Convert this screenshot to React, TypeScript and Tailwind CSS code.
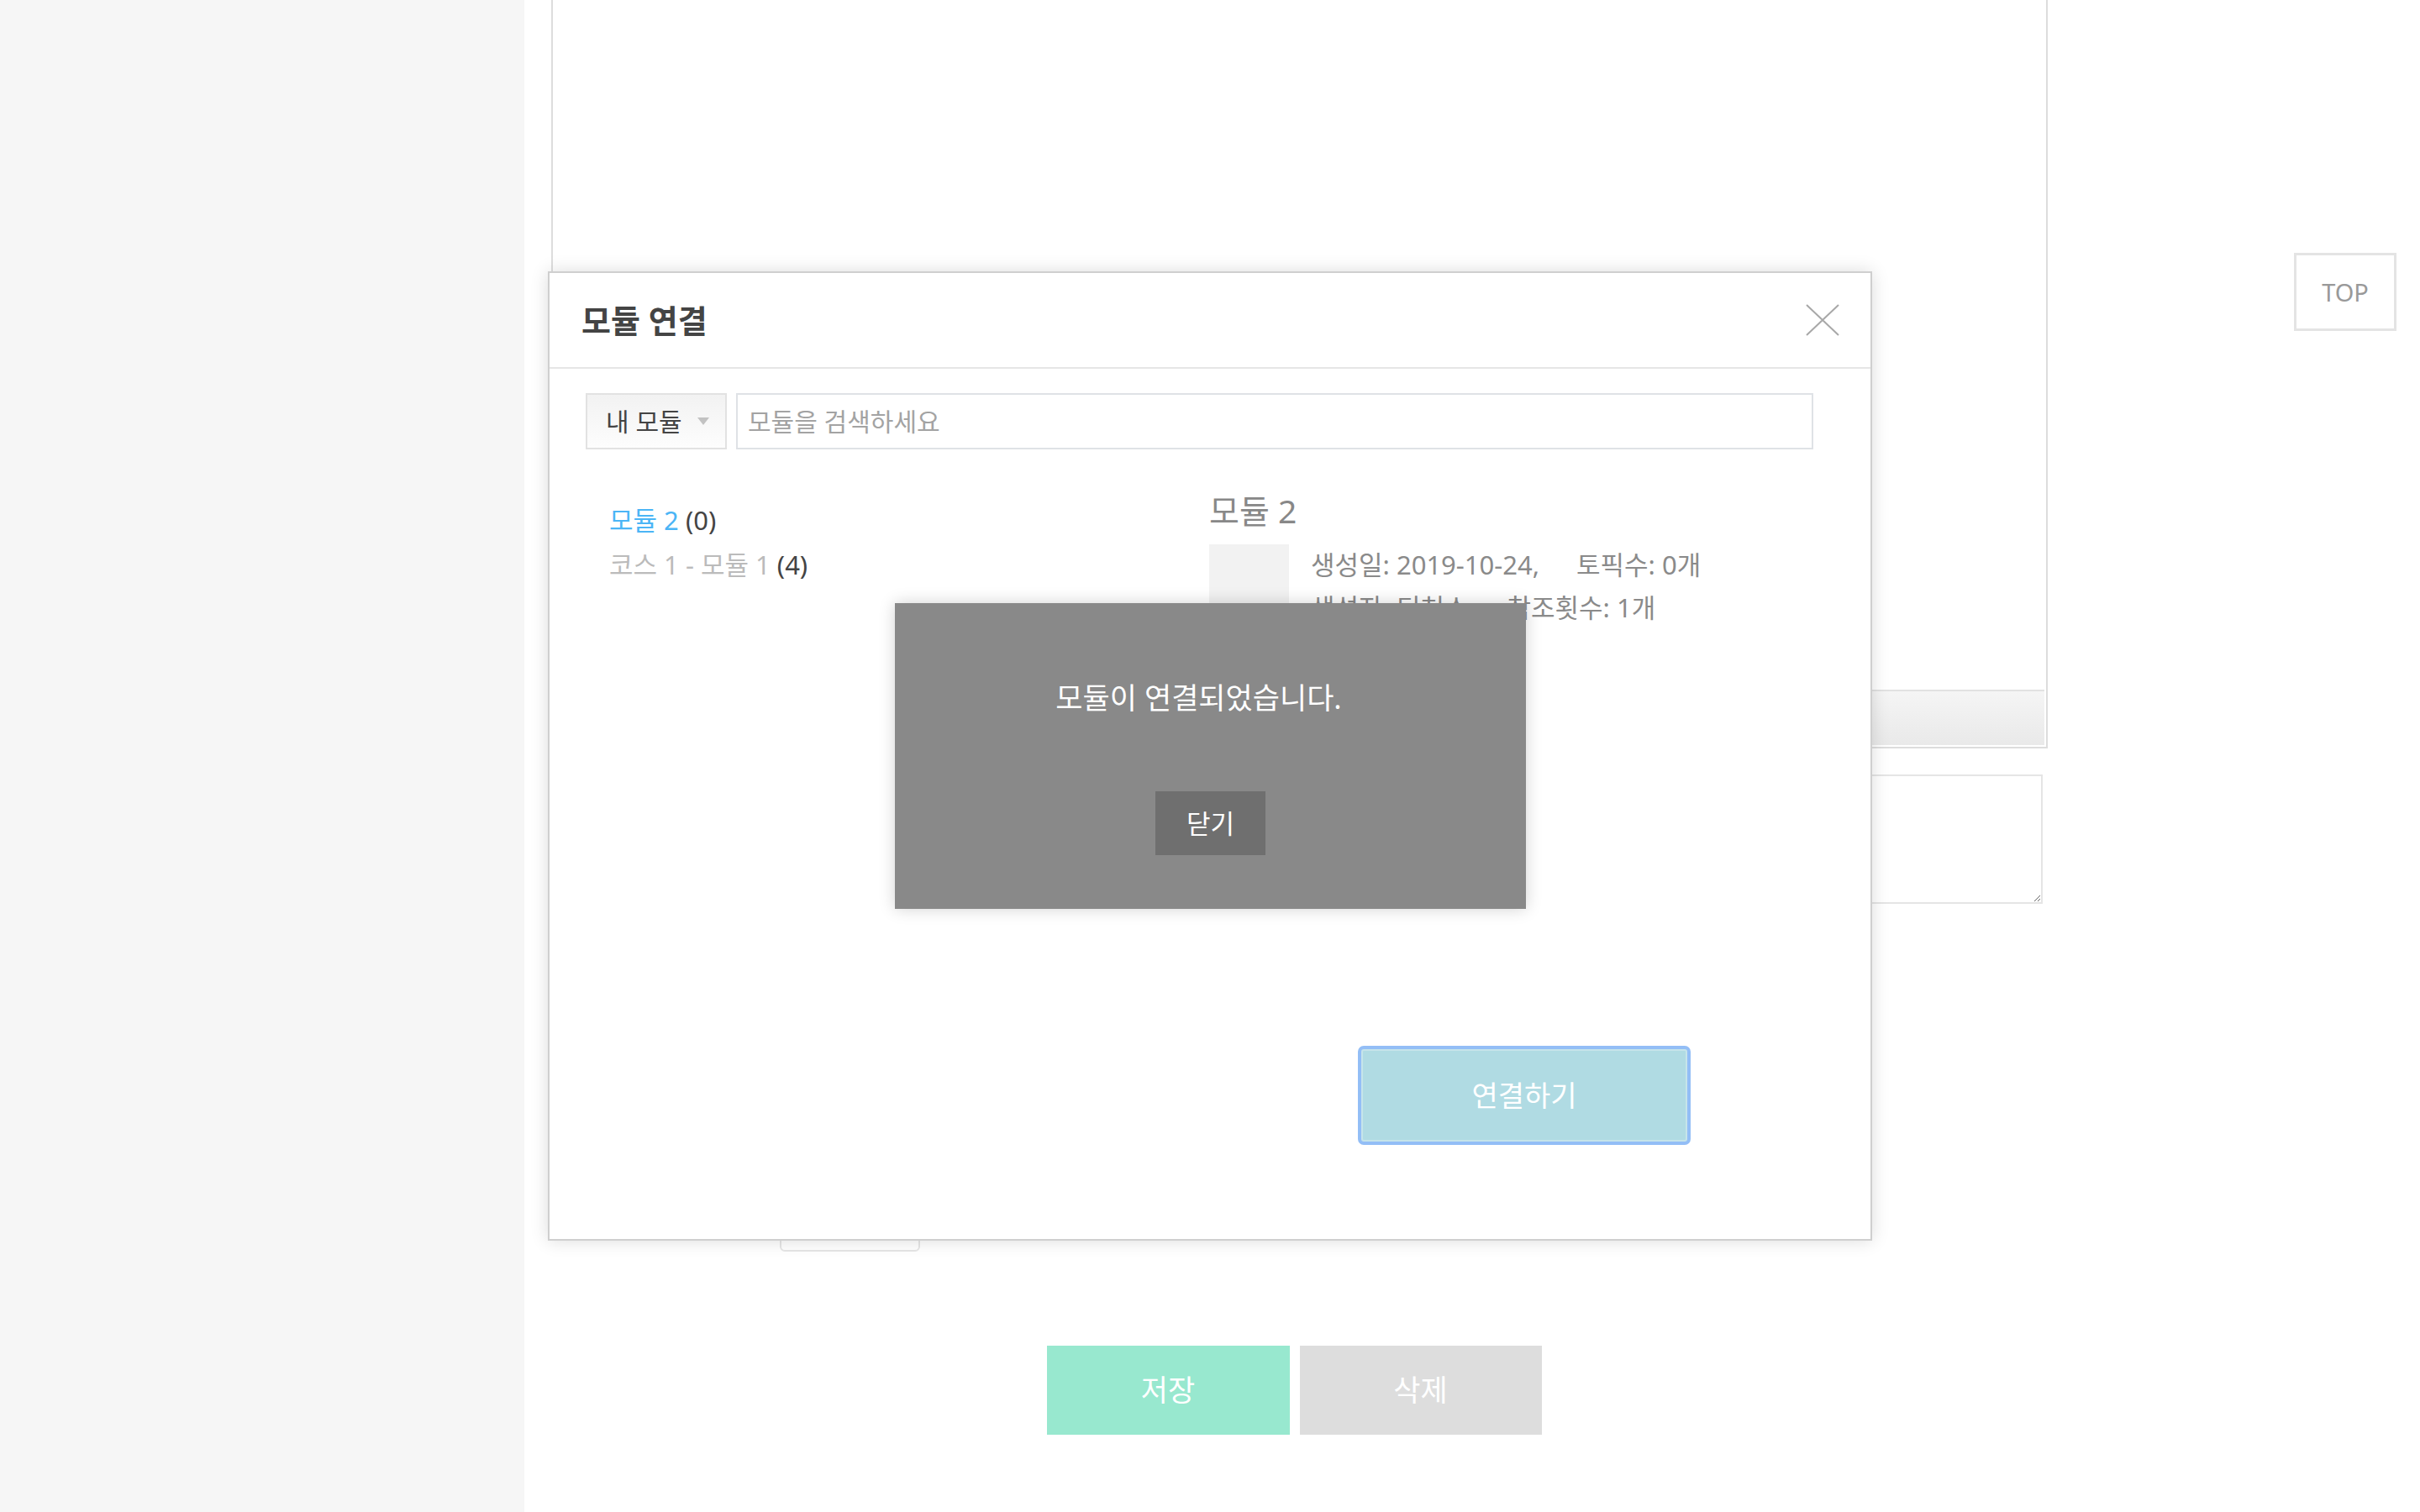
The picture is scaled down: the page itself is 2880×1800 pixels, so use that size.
import React from 'react';

const CloseIcon: React.FC = () => (
  <svg width="40" height="40" viewBox="0 0 40 40" fill="none">
    <path d="M1 2 L39 38 M39 2 L1 38" stroke="#a8a8a8" strokeWidth="2" />
  </svg>
);

const ModuleDialog: React.FC = () => {
  return (
    <div className="absolute left-[652px] top-[323px] w-[1576px] h-[1154px] bg-white border-2 border-[#cfcfcf] shadow-[0_0_20px_rgba(0,0,0,0.14)] flex flex-col">
      {/* header */}
      <div className="h-[114px] shrink-0 flex items-center justify-between pl-[38px] pr-[37px] border-b-2 border-[#e6e6e6]">
        <h3 className="text-[38px] font-bold text-[#444444]">모듈 연결</h3>
        <button className="w-[40px] h-[40px] flex items-center justify-center">
          <CloseIcon />
        </button>
      </div>

      {/* search */}
      <div className="mt-[29px] pl-[43px] pr-[68px] flex gap-[11px] h-[67px]">
        <div className="w-[168px] h-full border-2 border-[#e2e2e2] bg-gradient-to-b from-[#f2f2f2] to-[#fdfdfd] flex items-center pl-[22px] gap-[18px]">
          <span className="text-[30px] text-[#444444] leading-none">내 모듈</span>
          <span className="w-0 h-0 border-l-[7px] border-r-[7px] border-t-[9px] border-l-transparent border-r-transparent border-t-[#c2c2c2]" />
        </div>
        <div className="flex-1 h-full border-2 border-[#dfe2e6] flex items-center pl-[12px]">
          <span className="text-[30px] text-[#a3a3a3] leading-none">모듈을 검색하세요</span>
        </div>
      </div>

      {/* lists */}
      <div className="flex">
        <div className="w-[714px] ml-[71px] pt-[58px] text-[31px] leading-[53px]">
          <div>
            <span className="text-[#4bb5f6]">모듈 2</span> <span className="text-[#444444]">(0)</span>
          </div>
          <div>
            <span className="text-[#bbbbbb]">코스 1 - 모듈 1</span> <span className="text-[#444444]">(4)</span>
          </div>
        </div>
        <div className="pt-[48px]">
          <div className="text-[39px] leading-[50px] text-[#888888]">모듈 2</div>
          <div className="mt-[15px] flex gap-[26px]">
            <div className="w-[95px] h-[95px] bg-[#f2f2f2]" />
            <div className="-mt-[1px] text-[31px] leading-[51px] text-[#8a8a8a]">
              <div>
                <span>생성일: 2019-10-24,</span>
                <span className="ml-[44px]">토픽수: 0개</span>
              </div>
              <div>
                <span>생성자: 티쳐스</span>
                <span className="ml-[46px]">참조횟수: 1개</span>
              </div>
            </div>
          </div>
        </div>
      </div>

      {/* footer */}
      <div className="mt-auto flex justify-end pr-[218px] pb-[116px]">
        <button className="w-[388px] h-[110px] bg-[#b0dbe3] border-2 border-[#c6e4ea] rounded-[3px] ring-4 ring-[#93bef6] text-white text-[34px]">
          연결하기
        </button>
      </div>

      {/* alert */}
      <div className="absolute left-[411px] top-[393px] w-[751px] h-[364px] bg-[#898989] shadow-[0_0_18px_rgba(0,0,0,0.18)] flex flex-col items-center">
        <p className="mt-[90px] pr-[28px] text-[35px] leading-[46px] text-white">모듈이 연결되었습니다.</p>
        <button className="mt-[88px] w-[131px] h-[76px] bg-[#6f6f6f] text-white text-[31px]">닫기</button>
      </div>
    </div>
  );
};

const App: React.FC = () => {
  return (
    <div className="relative w-[2880px] h-[1800px] overflow-hidden bg-white flex font-['Noto_Sans','Noto_Sans_CJK_KR',sans-serif]">
      <aside className="w-[624px] h-full bg-[#f6f6f6] shrink-0" />

      <main className="w-[1781px] ml-[32px] flex flex-col">
        {/* editor */}
        <div className="h-[891px] border-2 border-t-0 border-[#dddddd] flex flex-col px-[2px] pb-[2px]">
          <div className="flex-1 bg-white" />
          <div className="h-[66px] border-t-2 border-[#e2e2e2] bg-gradient-to-b from-[#f5f5f5] to-[#e9e9e9]" />
        </div>

        <textarea
          readOnly
          className="mt-[31px] ml-[8px] mr-[6px] h-[154px] border-2 border-[#e5e5e5] bg-white resize-y outline-none"
        />

        <div className="mt-[354px] ml-[272px] w-[167px] h-[60px] border-2 border-[#e6e6e6] rounded-[6px] bg-white" />

        <div className="mt-[112px] flex justify-center gap-[12px] pr-[13px]">
          <button className="w-[289px] h-[106px] bg-[#98e8cf] text-white text-[35px]">저장</button>
          <button className="w-[288px] h-[106px] bg-[#dddddd] text-white text-[35px]">삭제</button>
        </div>
      </main>

      <button className="absolute left-[2730px] top-[301px] w-[122px] h-[93px] border-[3px] border-[#e4e4e4] bg-white text-[#999999] text-[29px]">
        TOP
      </button>

      <ModuleDialog />
    </div>
  );
};

export default App;
